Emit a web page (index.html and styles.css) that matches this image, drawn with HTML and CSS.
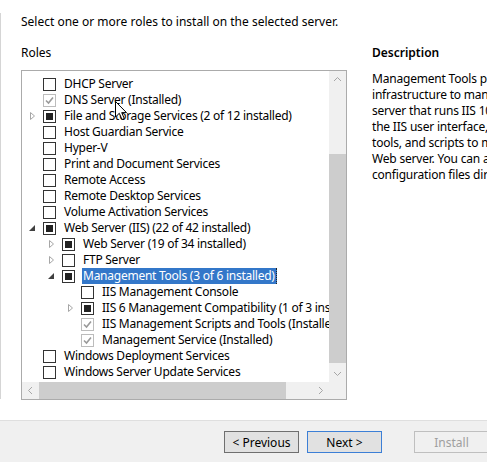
FILE: index.html
```html
<!DOCTYPE html>
<html lang="en">
<head>
<meta charset="UTF-8">
<title>Select server roles</title>
<link rel="stylesheet" href="styles.css">
</head>
<body>
<div class="main">
  <div class="rail"></div>
  <div class="content">
    <p class="intro">Select one or more roles to install on the selected server.</p>
    <div class="cols">
      <div class="roles">
        <div class="heading">Roles</div>
        <div class="listbox">
          <div class="viewport">
            <div class="row"><span class="tog"></span><span class="cb"></span><span class="lbl">DHCP Server</span></div>
            <div class="row"><span class="tog"></span><span class="cb done"><svg width="11" height="11" viewBox="0 0 11 11"><path d="M2 5.5 L4.5 8 L9 2.5" fill="none" stroke="#9a9a9a" stroke-width="1.6"/></svg></span><span class="lbl">DNS Server (Installed)</span></div>
            <div class="row"><span class="tog"><svg width="21" height="16"><path d="M8.5 4.5 L12.5 8 L8.5 11.5 Z" fill="#fff" stroke="#a6a6a6"/></svg></span><span class="cb mixed"></span><span class="lbl">File and Storage Services (2 of 12 installed)</span></div>
            <div class="row"><span class="tog"></span><span class="cb"></span><span class="lbl">Host Guardian Service</span></div>
            <div class="row"><span class="tog"></span><span class="cb"></span><span class="lbl">Hyper-V</span></div>
            <div class="row"><span class="tog"></span><span class="cb"></span><span class="lbl">Print and Document Services</span></div>
            <div class="row"><span class="tog"></span><span class="cb"></span><span class="lbl">Remote Access</span></div>
            <div class="row"><span class="tog"></span><span class="cb"></span><span class="lbl">Remote Desktop Services</span></div>
            <div class="row"><span class="tog"></span><span class="cb"></span><span class="lbl">Volume Activation Services</span></div>
            <div class="row"><span class="tog"><svg width="21" height="16"><path d="M13 5 L13 11 L7 11 Z" fill="#404040"/></svg></span><span class="cb mixed"></span><span class="lbl">Web Server (IIS) (22 of 42 installed)</span></div>
            <div class="row lvl1"><span class="tog"><svg width="21" height="16"><path d="M8.5 4.5 L12.5 8 L8.5 11.5 Z" fill="#fff" stroke="#a6a6a6"/></svg></span><span class="cb mixed"></span><span class="lbl">Web Server (19 of 34 installed)</span></div>
            <div class="row lvl1"><span class="tog"><svg width="21" height="16"><path d="M8.5 4.5 L12.5 8 L8.5 11.5 Z" fill="#fff" stroke="#a6a6a6"/></svg></span><span class="cb"></span><span class="lbl">FTP Server</span></div>
            <div class="row lvl1"><span class="tog"><svg width="21" height="16"><path d="M13 5 L13 11 L7 11 Z" fill="#404040"/></svg></span><span class="cb mixed"></span><span class="lbl selected">Management Tools (3 of 6 installed)</span></div>
            <div class="row lvl2"><span class="tog"></span><span class="cb"></span><span class="lbl">IIS Management Console</span></div>
            <div class="row lvl2"><span class="tog"><svg width="21" height="16"><path d="M8.5 4.5 L12.5 8 L8.5 11.5 Z" fill="#fff" stroke="#a6a6a6"/></svg></span><span class="cb mixed"></span><span class="lbl">IIS 6 Management Compatibility (1 of 3 installed)</span></div>
            <div class="row lvl2"><span class="tog"></span><span class="cb done"><svg width="11" height="11" viewBox="0 0 11 11"><path d="M2 5.5 L4.5 8 L9 2.5" fill="none" stroke="#9a9a9a" stroke-width="1.6"/></svg></span><span class="lbl">IIS Management Scripts and Tools (Installed)</span></div>
            <div class="row lvl2"><span class="tog"></span><span class="cb done"><svg width="11" height="11" viewBox="0 0 11 11"><path d="M2 5.5 L4.5 8 L9 2.5" fill="none" stroke="#9a9a9a" stroke-width="1.6"/></svg></span><span class="lbl">Management Service (Installed)</span></div>
            <div class="row"><span class="tog"></span><span class="cb"></span><span class="lbl">Windows Deployment Services</span></div>
            <div class="row"><span class="tog"></span><span class="cb"></span><span class="lbl">Windows Server Update Services</span></div>
          </div>
          <div class="vscroll">
            <span class="arrow"><svg width="17" height="17"><path d="M5 10 L8.5 6.5 L12 10" fill="none" stroke="#a6a6a6"/></svg></span>
            <div class="vtrack"><div class="vthumb"></div></div>
            <span class="arrow"><svg width="17" height="17"><path d="M5 7 L8.5 10.5 L12 7" fill="none" stroke="#a6a6a6"/></svg></span>
          </div>
          <div class="hscroll">
            <span class="arrow"><svg width="17" height="17"><path d="M10 5 L6.5 8.5 L10 12" fill="none" stroke="#a6a6a6"/></svg></span>
            <div class="htrack"><div class="hthumb"></div></div>
            <span class="arrow"><svg width="17" height="17"><path d="M7 5 L10.5 8.5 L7 12" fill="none" stroke="#a6a6a6"/></svg></span>
          </div>
          <div class="corner"></div>
        </div>
      </div>
      <div class="desc">
        <div class="heading strong">Description</div>
        <p class="desc-text">Management Tools provides<br>infrastructure to manage a Web<br>server that runs IIS 10. You can use<br>the IIS user interface, command-line<br>tools, and scripts to manage the<br>Web server. You can also edit<br>configuration files directly.</p>
      </div>
    </div>
  </div>
  <svg class="cursor" width="13" height="20" viewBox="0 0 13 20"><path d="M0.5 0.5 L0.5 16 L4.3 12.3 L7 18.5 L9.3 17.5 L6.7 11.6 L11.5 11.6 Z" fill="#fff" stroke="#000"/></svg>
</div>
<div class="footer">
  <button class="btn prev">&lt; Previous</button>
  <button class="btn next">Next &gt;</button>
  <button class="btn install" disabled>Install</button>
</div>
</body>
</html>
```

FILE: styles.css
```css
body {
  margin: 0;
  width: 487px;
  height: 462px;
  overflow: hidden;
  font-family: 'Noto Sans', 'Liberation Sans', sans-serif;
  font-size: 12px;
  color: #000;
  background: #fff;
}

.main {
  display: flex;
  height: 420px;
  position: relative;
}

.rail {
  width: 1px;
  height: 386px;
  margin-top: 13px;
  background: #d5d5d5;
}

.content {
  flex: 1;
  padding: 14px 0 0 20px;
  overflow: hidden;
}

.intro {
  margin: 0;
  line-height: 16px;
  white-space: nowrap;
}

.cols {
  display: flex;
  margin-top: 15px;
}

.heading {
  line-height: 16px;
  margin-bottom: 9px;
}

.roles {
  width: 326px;
  flex-shrink: 0;
}

.listbox {
  height: 330px;
  box-sizing: border-box;
  border: 1px solid #ababab;
  display: grid;
  grid-template-columns: 1fr 17px;
  grid-template-rows: 1fr 17px;
}

.viewport {
  overflow: hidden;
  padding-top: 5px;
  white-space: nowrap;
  letter-spacing: -0.25px;
}

.row {
  display: flex;
  align-items: center;
  height: 16px;
}

.lvl1 { padding-left: 19px; }
.lvl2 { padding-left: 38px; }

.tog {
  width: 21px;
  height: 16px;
  flex-shrink: 0;
}

.tog svg { display: block; }

.cb {
  width: 13px;
  height: 13px;
  box-sizing: border-box;
  border: 1px solid #333;
  background: #fff;
  margin-right: 8px;
  flex-shrink: 0;
  display: flex;
  align-items: center;
  justify-content: center;
}

.cb.mixed::after {
  content: '';
  width: 7px;
  height: 7px;
  background: #222;
}

.cb.done {
  border-color: #bcbcbc;
}

.cb svg { display: block; }

.lbl {
  line-height: 16px;
}

.lbl.selected {
  background: #3377c9;
  color: #fff;
  margin-left: -1px;
  padding: 0 1px;
  border-right: 1px dotted #222;
}

.vscroll {
  background: #f0f0f0;
  display: flex;
  flex-direction: column;
}

.hscroll {
  background: #f0f0f0;
  display: flex;
}

.arrow {
  width: 17px;
  height: 17px;
  flex-shrink: 0;
}

.arrow svg { display: block; }

.vtrack { flex: 1; }

.vthumb {
  margin-top: 66px;
  height: 209px;
  background: #cdcdcd;
}

.htrack { flex: 1; }

.hthumb {
  width: 247px;
  height: 17px;
  background: #cdcdcd;
}

.corner { background: #f0f0f0; }

.desc {
  margin-left: 25px;
  width: 220px;
  flex-shrink: 0;
}

.strong { font-weight: 600; }

.desc-text {
  margin: 0;
  padding-top: 1px;
  line-height: 16px;
  white-space: nowrap;
  letter-spacing: -0.2px;
}

.cursor {
  position: absolute;
  left: 115px;
  top: 101px;
}

.footer {
  height: 42px;
  box-sizing: border-box;
  border-top: 1px solid #dfdfdf;
  background: #f0f0f0;
  display: flex;
  align-items: flex-start;
  padding: 10px 0 0 224px;
  gap: 8px;
}

.btn {
  width: 75px;
  height: 22px;
  flex-shrink: 0;
  font-family: inherit;
  font-size: 12px;
  color: #000;
  background: #e1e1e1;
  border: 1px solid #6f6f6f;
  padding: 0;
}

.btn.next { border-color: #3c7fd6; }

.btn.install {
  margin-left: 24px;
  border-color: #bfbfbf;
  background: #f0f0f0;
  color: #9f9f9f;
}
```
